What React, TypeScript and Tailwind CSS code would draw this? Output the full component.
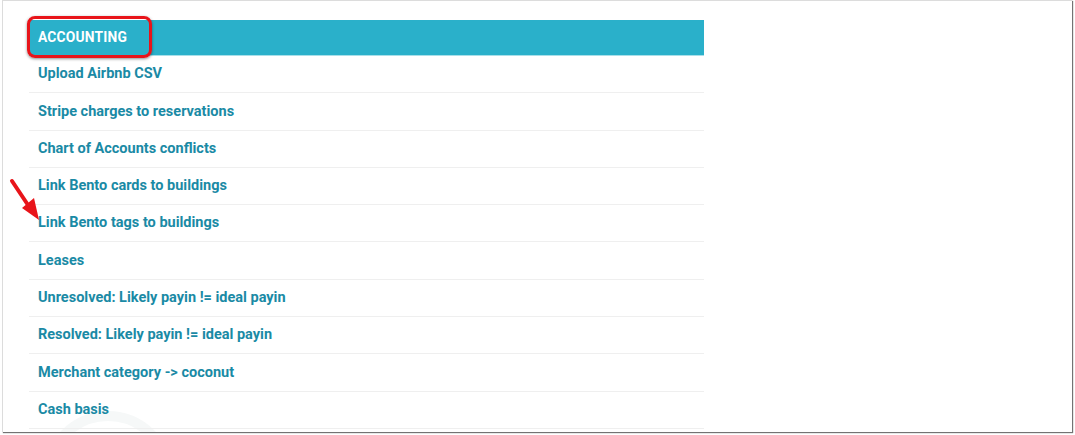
import React from "react";

const rows = [
  "Upload Airbnb CSV",
  "Stripe charges to reservations",
  "Chart of Accounts conflicts",
  "Link Bento cards to buildings",
  "Link Bento tags to buildings",
  "Leases",
  "Unresolved: Likely payin != ideal payin",
  "Resolved: Likely payin != ideal payin",
  "Merchant category -> coconut",
  "Cash basis",
];

export default function App() {
  return (
    <div className="w-[1075px] h-[435px] bg-white overflow-hidden relative" style={{ fontFamily: "Roboto, 'Liberation Sans', sans-serif" }}>
      <div className="absolute left-[2px] top-0 w-[1070px] h-[432px] bg-white border-l border-t border-[#dcdcdc] shadow-[1px_1px_1px_rgba(0,0,0,0.55)] overflow-hidden">
        <div className="absolute left-[40px] top-[410px] w-[130px] h-[130px] rounded-full border-[10px] border-[#f6f8f8]" />
        <div className="relative pl-[26px] pt-[19px]">
          <div className="w-[675px]">
            <div className="h-[36px] bg-[#2ab0ca] border-b border-[#a8dfe9] flex items-center pl-[9px] text-white text-[13.8px] font-bold tracking-[0.2px]">
              ACCOUNTING
            </div>
            {rows.map((r) => (
              <div key={r} className="h-[37.3px] border-b border-[#efefef] flex items-center pl-[9px] text-[#1a8aa5] text-[14.5px] font-bold">
                {r}
              </div>
            ))}
          </div>
        </div>
      </div>
      <div className="absolute left-[27px] top-[16px] w-[125px] h-[42px] rounded-[8px] border-[3.5px] border-[#e8141a] shadow-[0_1px_3px_rgba(0,0,0,0.45)]" />
      <svg className="absolute left-0 top-0" width="60" height="240" viewBox="0 0 60 240">
        <line x1="12" y1="181" x2="28" y2="205" stroke="#e8141a" strokeWidth="4" strokeLinecap="round" />
        <polygon points="39,220 22,208 34,198" fill="#e8141a" />
      </svg>
    </div>
  );
}
